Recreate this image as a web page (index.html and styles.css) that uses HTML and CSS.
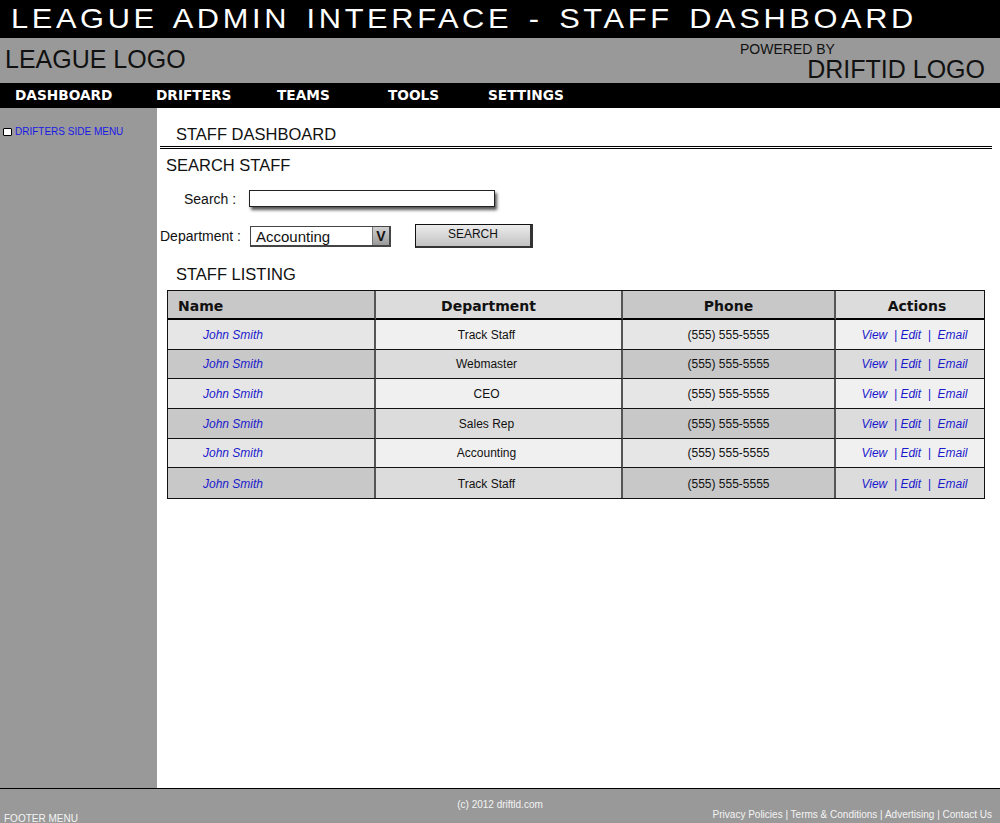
FILE: index.html
```html
<!DOCTYPE html>
<html lang="en">
<head>
<meta charset="utf-8">
<title>League Admin Interface - Staff Dashboard</title>
<link rel="stylesheet" href="styles.css">
</head>
<body>
<div class="page">
  <header class="topbar">
    <h1 class="title">LEAGUE ADMIN INTERFACE - STAFF DASHBOARD</h1>
  </header>
  <div class="brandbar">
    <div class="league-logo">LEAGUE LOGO</div>
    <div class="powered">
      <span class="powered-by">POWERED BY</span>
      <span class="driftid">DRIFTID LOGO</span>
    </div>
  </div>
  <nav class="nav">
    <a href="#">DASHBOARD</a>
    <a href="#">DRIFTERS</a>
    <a href="#">TEAMS</a>
    <a href="#">TOOLS</a>
    <a href="#">SETTINGS</a>
  </nav>
  <div class="body">
    <aside class="sidebar">
      <div class="side-item"><span class="box"></span><a href="#">DRIFTERS SIDE MENU</a></div>
    </aside>
    <main class="main">
      <h2 class="page-title">STAFF DASHBOARD</h2>
      <h3 class="section-title">SEARCH STAFF</h3>
      <div class="search-row">
        <span class="label">Search :</span>
        <input class="search-input" type="text">
      </div>
      <div class="dept-row">
        <span class="label">Department :</span>
        <div class="select"><span class="select-value">Accounting</span><span class="select-arrow">V</span></div>
        <button class="btn" type="button">SEARCH</button>
      </div>
      <h3 class="listing-title">STAFF LISTING</h3>
      <table class="staff-table">
        <thead>
          <tr><th class="col-name">Name</th><th class="col-dept">Department</th><th class="col-phone">Phone</th><th class="col-actions">Actions</th></tr>
        </thead>
        <tbody>
          <tr><td class="name-cell"><a href="#">John Smith</a></td><td class="dept-cell">Track Staff</td><td>(555) 555-5555</td><td class="actions"><a href="#">View&nbsp; | Edit&nbsp; |&nbsp; Email</a></td></tr>
          <tr><td class="name-cell"><a href="#">John Smith</a></td><td class="dept-cell">Webmaster</td><td>(555) 555-5555</td><td class="actions"><a href="#">View&nbsp; | Edit&nbsp; |&nbsp; Email</a></td></tr>
          <tr><td class="name-cell"><a href="#">John Smith</a></td><td class="dept-cell">CEO</td><td>(555) 555-5555</td><td class="actions"><a href="#">View&nbsp; | Edit&nbsp; |&nbsp; Email</a></td></tr>
          <tr><td class="name-cell"><a href="#">John Smith</a></td><td class="dept-cell">Sales Rep</td><td>(555) 555-5555</td><td class="actions"><a href="#">View&nbsp; | Edit&nbsp; |&nbsp; Email</a></td></tr>
          <tr><td class="name-cell"><a href="#">John Smith</a></td><td class="dept-cell">Accounting</td><td>(555) 555-5555</td><td class="actions"><a href="#">View&nbsp; | Edit&nbsp; |&nbsp; Email</a></td></tr>
          <tr><td class="name-cell"><a href="#">John Smith</a></td><td class="dept-cell">Track Staff</td><td>(555) 555-5555</td><td class="actions"><a href="#">View&nbsp; | Edit&nbsp; |&nbsp; Email</a></td></tr>
        </tbody>
      </table>
    </main>
  </div>
  <footer class="footer">
    <div class="footer-left">FOOTER MENU</div>
    <div class="footer-center">(c) 2012 driftld.com</div>
    <div class="footer-right">Privacy Policies | Terms &amp; Conditions | Advertising | Contact Us</div>
  </footer>
</div>
</body>
</html>
```

FILE: styles.css
```css
* { box-sizing: border-box; }
html, body { margin: 0; padding: 0; }
body { font-family: "Liberation Sans", Arial, sans-serif; color: #111; background: #fff; }

.page { width: 1000px; height: 823px; display: flex; flex-direction: column; overflow: hidden; }

/* Top title bar */
.topbar { height: 38px; background: #000; flex: none; padding-left: 11px; }
.title {
  margin: 0; font-weight: normal; color: #fff;
  font-size: 28px; line-height: 38px;
  letter-spacing: 3.3px; word-spacing: 4px;
  white-space: nowrap;
  transform: scaleX(1.1); transform-origin: left center;
}

/* Brand bar */
.brandbar { height: 45px; background: #999; display: flex; justify-content: space-between; flex: none; color: #111; }
.league-logo { font-size: 25px; line-height: 25px; padding: 9px 0 0 5px; }
.powered { width: 245px; margin-right: 15px; display: flex; flex-direction: column; padding-top: 4px; }
.powered-by { font-size: 14px; line-height: 14px; }
.driftid { font-size: 25px; line-height: 25px; align-self: flex-end; margin-top: 1px; }

/* Nav */
.nav { height: 25px; background: #000; display: grid; grid-template-columns: 141px 121px 111px 100px 1fr; padding-left: 15px; flex: none; }
.nav a { color: #fff; font-family: "DejaVu Sans", sans-serif; font-weight: bold; font-size: 13.7px; line-height: 25px; text-decoration: none; white-space: nowrap; }

/* Body */
.body { flex: 1; display: flex; min-height: 0; }
.sidebar { width: 157px; background: #999; padding-top: 18px; flex: none; }
.side-item { display: flex; align-items: center; gap: 3px; padding-left: 3px; font-size: 10px; line-height: 12px; }
.box { width: 9px; height: 8px; border: 1.5px solid #000; background: #fff; border-radius: 1px; }
.side-item a { color: #1a1ae6; text-decoration: none; }

.main { flex: 1; background: #fff; padding: 16px 8px 0 3px; }
.page-title {
  margin: 0; font-weight: normal; font-size: 16.5px; line-height: 20px;
  padding: 0 0 2px 16px; border-bottom: 3px double #000; color: #111;
}
.section-title { margin: 6px 0 0; font-weight: normal; font-size: 16.5px; line-height: 20px; padding-left: 6px; }

.label { font-size: 14px; white-space: nowrap; }
.search-row { display: flex; align-items: center; margin-top: 15px; padding-left: 24px; height: 17px; }
.search-input {
  width: 246px; height: 17px; margin: 0 0 0 13px; padding: 0;
  border: 1px solid #222; background: #fff;
  box-shadow: 2px 3px 3px #555; outline: none;
}

.dept-row { display: flex; align-items: center; margin-top: 17px; height: 24px; }
.select {
  width: 141px; height: 21px; display: flex; margin-left: 9px;
  border: 1px solid #444; border-right-width: 2px; border-bottom-width: 2px; background: #fff;
}
.select-value { flex: 1; font-size: 15px; line-height: 19px; padding-left: 5px; }
.select-arrow {
  width: 17px; background: linear-gradient(#d0d0d0, #9a9a9a); border-left: 1px solid #777;
  font-size: 14px; line-height: 19px; text-align: center; font-weight: bold;
}
.btn {
  margin-left: 24px; width: 118px; height: 24px; padding: 0 0 4px;
  border: 1px solid #111; border-right: 3px solid #333; border-bottom: 2px solid #333;
  background: linear-gradient(#ececec, #c2c2c2);
  font-family: "Liberation Sans", Arial, sans-serif; font-size: 12px; color: #111;
}

.listing-title { margin: 16px 0 0; font-weight: normal; font-size: 16.5px; line-height: 20px; padding-left: 16px; }

/* Table */
.staff-table {
  margin: 6px 0 0 7px; width: 818px; table-layout: fixed;
  border: 1px solid #111; border-collapse: separate; border-spacing: 0;
}
.staff-table th, .staff-table td { border-right: 2px solid #555; padding: 0; }
.staff-table th:last-child, .staff-table td:last-child { border-right: none; }
.col-name { width: 208px; }
.col-dept { width: 247px; }
.col-phone { width: 213px; }
.col-actions { width: 148px; }

.staff-table thead tr { height: 29px; }
.staff-table th {
  border-bottom: 2px solid #000;
  font-family: "DejaVu Sans", sans-serif; font-weight: bold; font-size: 14px; color: #111;
  text-align: center; vertical-align: middle; padding-top: 2px;
}
.staff-table th:nth-child(odd) { background: #c8c8c8; }
.staff-table th:nth-child(even) { background: #dcdcdc; }
.staff-table th.col-name { text-align: left; padding-left: 10px; }
.staff-table th.col-dept { padding-right: 20px; }
.staff-table th.col-actions { padding-left: 14px; }

.staff-table tbody tr { height: 29.67px; }
.staff-table td { border-bottom: 1px solid #111; font-size: 12px; text-align: center; vertical-align: middle; color: #111; padding-top: 1px; }
.staff-table tbody tr:last-child td { border-bottom: none; }
.staff-table tbody tr:nth-child(odd) td:nth-child(odd) { background: #e6e6e6; }
.staff-table tbody tr:nth-child(odd) td:nth-child(even) { background: #f0f0f0; }
.staff-table tbody tr:nth-child(even) td:nth-child(odd) { background: #c8c8c8; }
.staff-table tbody tr:nth-child(even) td:nth-child(even) { background: #dcdcdc; }
.staff-table td.name-cell { text-align: left; padding-left: 35px; }
.staff-table td.dept-cell { padding-right: 24px; }
.staff-table td.actions { padding-left: 9px; }
.staff-table a { color: #1a1acc; font-style: italic; text-decoration: none; white-space: nowrap; }

/* Footer */
.footer {
  height: 35px; flex: none; background: #999; border-top: 1px solid #000;
  display: grid; grid-template-columns: 1fr auto 1fr;
  color: #f4f4f4; font-size: 10px; line-height: 11px;
}
.footer-left { align-self: end; padding: 0 0 0 4px; margin-bottom: -1px; white-space: nowrap; }
.footer-center { padding-top: 10px; white-space: nowrap; }
.footer-right { text-align: right; padding: 20px 8px 0 0; white-space: nowrap; }
```
